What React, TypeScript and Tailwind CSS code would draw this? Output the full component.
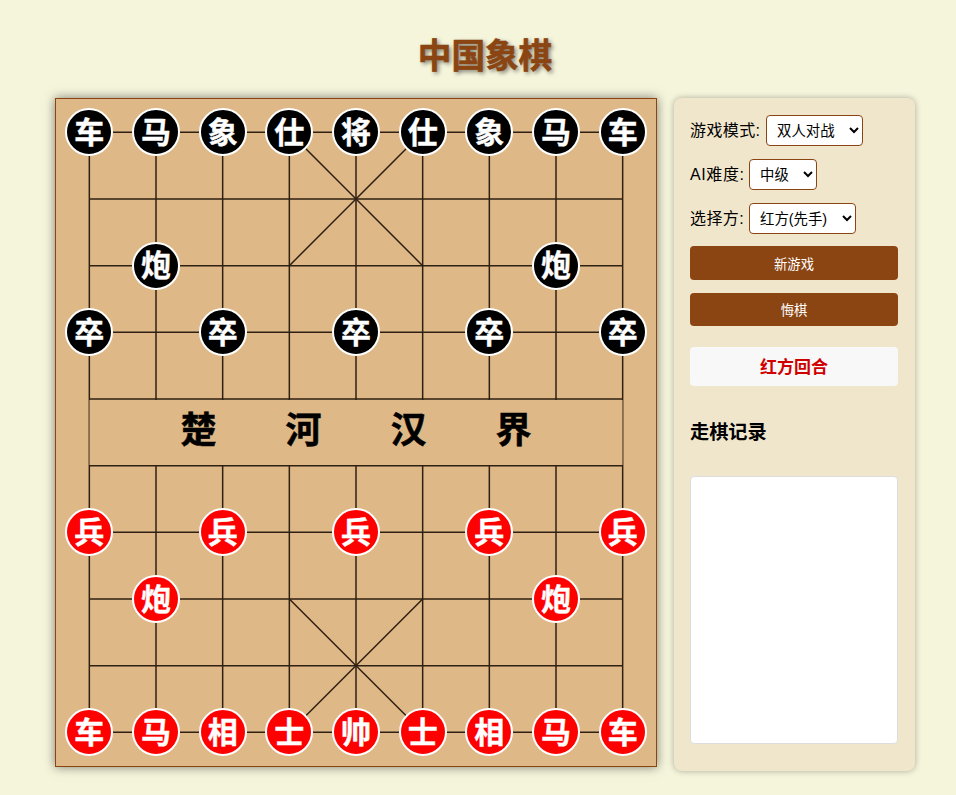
import React from "react";

const CELL = 600 / 9;
const px = (col: number) => CELL / 2 + col * CELL;
const py = (row: number) => CELL / 2 + row * CELL;

type Piece = { col: number; row: number; label: string; red?: boolean };

const backBlack = ["车", "马", "象", "仕", "将", "仕", "象", "马", "车"];
const backRed = ["车", "马", "相", "士", "帅", "士", "相", "马", "车"];

const pieces: Piece[] = [
  ...backBlack.map((label, col) => ({ col, row: 0, label })),
  { col: 1, row: 2, label: "炮" },
  { col: 7, row: 2, label: "炮" },
  ...[0, 2, 4, 6, 8].map((col) => ({ col, row: 3, label: "卒" })),
  ...[0, 2, 4, 6, 8].map((col) => ({ col, row: 6, label: "兵", red: true })),
  { col: 1, row: 7, label: "炮", red: true },
  { col: 7, row: 7, label: "炮", red: true },
  ...backRed.map((label, col) => ({ col, row: 9, label, red: true })),
];

const BoardLines = () => (
  <svg width="600" height="667" viewBox="0 0 600 667" className="block">
    <g stroke="#2e2012" strokeWidth="1.5" fill="none">
      {Array.from({ length: 10 }).map((_, i) => (
        <line key={i} x1={px(0)} x2={px(8)} y1={py(i)} y2={py(i)} />
      ))}
      {Array.from({ length: 9 }).map((_, i) => (
        <line key={i} x1={px(i)} x2={px(i)} y1={py(0)} y2={py(9)} />
      ))}
      <line x1={px(3)} y1={py(0)} x2={px(5)} y2={py(2)} />
      <line x1={px(5)} y1={py(0)} x2={px(3)} y2={py(2)} />
      <line x1={px(3)} y1={py(7)} x2={px(5)} y2={py(9)} />
      <line x1={px(5)} y1={py(7)} x2={px(3)} y2={py(9)} />
    </g>
  </svg>
);

const Board = () => (
  <div className="relative w-[602px] h-[669px] shrink-0 bg-[#deb887] border border-[#8b4513] shadow-[0_0_10px_rgba(0,0,0,0.5)]">
    <BoardLines />
    <div className="absolute left-[33px] right-[33px] top-[301px] h-[65px] pb-[4px] bg-[#deb887] border-x border-[#2e2012]/50 flex items-center justify-center gap-[69px] text-[36px] font-bold text-black [-webkit-text-stroke:0.5px_black]">
      <span>楚</span>
      <span>河</span>
      <span>汉</span>
      <span>界</span>
    </div>
    {pieces.map((p, i) => (
      <div
        key={i}
        className={`absolute w-12 h-12 rounded-full border-2 border-white flex items-center justify-center text-[30px] font-bold text-white [-webkit-text-stroke:0.4px_white] ${
          p.red ? "bg-[#ff0000]" : "bg-black"
        }`}
        style={{ left: px(p.col) - 24, top: py(p.row) - 24 }}
      >
        {p.label}
      </div>
    ))}
  </div>
);

const SelectRow = ({
  label,
  labelClass,
  selectClass,
  options,
}: {
  label: string;
  labelClass: string;
  selectClass: string;
  options: string[];
}) => (
  <div className="flex items-center h-[31px] mb-[13px]">
    <label className={`text-base text-black ${labelClass}`}>{label}</label>
    <select className={`h-[31px] pl-[6px] pr-[4px] bg-white border border-[#8b4513] rounded-[4px] text-[14.4px] text-black ${selectClass}`}>
      {options.map((o) => (
        <option key={o}>{o}</option>
      ))}
    </select>
  </div>
);

export default function App() {
  return (
    <div
      className="min-h-[795px] bg-[#f5f5dc] pt-[32px] pl-[55px] overflow-hidden"
      style={{ fontFamily: '"Liberation Sans", "Noto Sans CJK SC", sans-serif' }}
    >
      <h1 className="w-[860px] text-center text-[33.6px] leading-[50px] font-bold text-[#8b4513] [-webkit-text-stroke:0.6px_#8b4513] [text-shadow:2px_2px_4px_rgba(0,0,0,0.5)] mb-[16px]">
        中国象棋
      </h1>
      <div className="flex gap-[17px] items-start">
        <Board />
        <div className="w-[241px] h-[673px] bg-[#f0e6cc] rounded-[8px] shadow-[0_0_6px_rgba(0,0,0,0.3)] pt-[17px] pl-[16px] pr-[17px]">
          <SelectRow label="游戏模式:" labelClass="w-[76px] tracking-[0.4px]" selectClass="w-[97px]" options={["双人对战", "人机对战"]} />
          <SelectRow label="AI难度:" labelClass="w-[59px] tracking-[0.6px]" selectClass="w-[68px]" options={["中级", "初级", "高级"]} />
          <div className="-mb-px">
            <SelectRow label="选择方:" labelClass="w-[59px] tracking-[0.4px]" selectClass="w-[107px]" options={["红方(先手)", "黑方(后手)"]} />
          </div>
          <button className="block w-full h-[34px] pt-[3px] bg-[#8b4513] text-white text-[13.33px] rounded-[4px] mb-[13px]">
            新游戏
          </button>
          <button className="block w-full h-[33px] pt-[2px] bg-[#8b4513] text-white text-[13.33px] rounded-[4px]">
            悔棋
          </button>
          <div className="h-[39px] pt-[2px] mt-[21px] bg-[#f8f8f8] rounded-[4px] flex items-center justify-center text-[17px] font-bold text-[#d00000]">
            红方回合
          </div>
          <h3 className="mt-[33px] text-[19.2px] leading-[28px] font-bold text-black">走棋记录</h3>
          <div className="mt-[29px] h-[268px] bg-white border border-[#ddd] rounded-[4px]" />
        </div>
      </div>
    </div>
  );
}
